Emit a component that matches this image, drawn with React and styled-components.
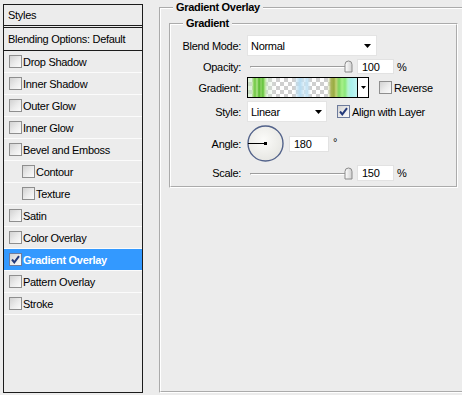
import React from 'react';
import styled, { createGlobalStyle } from 'styled-components';

const GlobalStyle = createGlobalStyle`
  html, body { margin: 0; padding: 0; background: #ececec; }
  body {
    font-family: "Liberation Sans", Arial, sans-serif;
    font-size: 11px;
    color: #000;
    overflow: hidden;
  }
  * { box-sizing: border-box; }
`;

const Page = styled.div`
  display: flex;
  align-items: flex-start;
  gap: 16px;
  width: 462px;
  height: 395px;
  padding: 4px 0 0 3px;
  overflow: hidden;
  letter-spacing: -0.3px;
`;

/* ---------- left styles list ---------- */
const StylesPanel = styled.div`
  flex: none;
  width: 140px;
  height: 389px;
  border: 1px solid #1c1c1c;
  display: flex;
  flex-direction: column;
`;

const PanelHeader = styled.div`
  height: 23px;
  padding-left: 4px;
  display: flex;
  align-items: center;
  border-bottom: 3px double #1c1c1c;
`;

const BlendRow = styled.div`
  height: 23px;
  padding-left: 4px;
  display: flex;
  align-items: center;
  border-bottom: 1px solid #1c1c1c;
`;

const StyleItem = styled.div`
  height: 22px;
  display: flex;
  align-items: center;
  gap: 1px;
  padding-left: ${p => (p.$indent ? 18 : 5)}px;
  border-bottom: 1px solid #fbfbfb;
  background: ${p => (p.$selected ? '#3399ff' : 'transparent')};
  color: ${p => (p.$selected ? '#fff' : '#000')};
  font-weight: ${p => (p.$selected ? 'bold' : 'normal')};
`;

const Box = styled.span`
  flex: none;
  position: relative;
  width: 13px;
  height: 13px;
  border: 1px solid ${p => (p.$checked ? '#6d7b9c' : '#8e8e8e')};
  background: linear-gradient(135deg, #d2d2d2 0%, #ececec 55%, #fbfbfb 100%);
  display: inline-flex;
  align-items: center;
  justify-content: center;
`;

const Check = ({ checked }) => (
  <Box $checked={checked}>
    {checked && (
      <svg width="11" height="11" viewBox="0 0 11 11">
        <path d="M2 5.5 L4.3 8.3 L9 2.2" fill="none" stroke="#23397a" strokeWidth="2" />
      </svg>
    )}
  </Box>
);

/* ---------- right side groups ---------- */
const Group = styled.fieldset`
  margin: 0;
  min-width: 0;
  border: 2px groove #fff;
`;

const OuterGroup = styled(Group)`
  flex: none;
  width: 320px;
  height: 392px;
  margin-top: -3px;
  padding: 3px 0 0 8px;
`;

const InnerGroup = styled(Group)`
  width: 289px;
  padding: 5px 0 5px 4px;
`;

const Legend = styled.legend`
  padding: 0 3px;
  margin-left: ${p => p.$indent}px;
  font-weight: bold;
  line-height: 13px;
`;

const Rows = styled.div`
  display: flex;
  flex-direction: column;
  gap: 3px;
`;

const Row = styled.div`
  display: flex;
  align-items: center;
  height: ${p => p.$h}px;
`;

const Label = styled.span`
  flex: none;
  width: 66px;
  margin-right: 6px;
  text-align: right;
`;

const Select = styled.div`
  flex: none;
  width: ${p => p.$w}px;
  height: 21px;
  background: #fff;
  border: 1px solid #e4e4e4;
  display: flex;
  align-items: center;
  justify-content: space-between;
  padding: 0 ${p => p.$pr}px 0 3px;
`;

const Arrow = ({ w = 7, h = 4 }) => (
  <svg width={w} height={h} viewBox={`0 0 ${w} ${h}`}>
    <polygon points={`0,0 ${w},0 ${w / 2},${h}`} fill="#000" />
  </svg>
);

const NumInput = styled.input`
  flex: none;
  width: ${p => p.$w}px;
  height: ${p => p.$h}px;
  margin: 0 0 0 ${p => p.$ml}px;
  padding: 0 0 0 4px;
  border: 1px solid #e2e2e2;
  background: #fff;
  font: inherit;
  letter-spacing: inherit;
  color: #000;
  outline: none;
`;

const Unit = styled.span`
  margin-left: 3px;
`;

const SliderBox = styled.div`
  flex: none;
  position: relative;
  width: 106px;
  height: 13px;
`;

const Track = styled.div`
  position: absolute;
  left: 3px;
  right: 4px;
  top: 6px;
  height: 2px;
  border-top: 1px solid #9d9d9d;
  border-bottom: 1px solid #fff;
  border-left: 1px solid #9d9d9d;
`;

const Thumb = styled.svg`
  position: absolute;
  top: 0;
`;

const Slider = ({ pos }) => (
  <SliderBox>
    <Track />
    <Thumb width="9" height="13" viewBox="0 0 9 13" style={{ left: pos }}>
      <defs>
        <linearGradient id="thg" x1="0" x2="1" y1="0" y2="0">
          <stop offset="0" stopColor="#ffffff" />
          <stop offset="1" stopColor="#cfcfcf" />
        </linearGradient>
      </defs>
      <path d="M1 4.5 Q1 1 4.5 1 Q8 1 8 4.5 L8 12 L1 12 Z" fill="url(#thg)" stroke="#8a8a8a" strokeWidth="1" />
    </Thumb>
  </SliderBox>
);

const GradientBox = styled.div`
  flex: none;
  display: flex;
  width: 122px;
  height: 21px;
  border: 1px solid #000;
  background: #fff;
`;

const Swatch = styled.div`
  flex: 1;
  background:
    linear-gradient(to right,
      rgba(196, 232, 186, 0.55) 0px, rgba(196, 232, 186, 0.55) 4px,
      #a6dc80 5px, #6cc840 7px, #b0e48c 9px, #54b82c 11px, #8fd468 13px,
      #5fc238 15px, #b8e698 17px, rgba(200, 232, 196, 0.5) 19px,
      rgba(220, 236, 220, 0.25) 24px, transparent 28px,
      transparent 46px, rgba(190, 222, 240, 0.6) 49px, #b6dcf2 52px,
      rgba(206, 232, 246, 0.6) 56px, #c2e2f4 59px, transparent 63px,
      transparent 79px, rgba(210, 220, 170, 0.6) 81px, #a9b45a 83px,
      #98ac40 86px, #c4d478 88px, #7cd460 91px, #a8f08a 94px,
      #8ae878 97px, #b6f4d2 100px, #a8f0ec 103px, #c6f6f4 110px),
    repeating-conic-gradient(#cfcfcf 0 25%, #ffffff 0 50%) 0 0 / 8px 8px;
`;

const SwatchArrow = styled.div`
  flex: none;
  width: 11px;
  border-left: 1px solid #000;
  display: flex;
  align-items: center;
  justify-content: center;
`;

const CheckLabel = styled.label`
  display: flex;
  align-items: center;
  gap: 2px;
  margin-left: 10px;
`;

const Dial = () => (
  <svg width="37" height="37" viewBox="0 0 37 37">
    <defs>
      <radialGradient id="dialg" cx="0.45" cy="0.4" r="0.6">
        <stop offset="0" stopColor="#fbfbf9" />
        <stop offset="1" stopColor="#e7e7e3" />
      </radialGradient>
    </defs>
    <circle cx="18.5" cy="18.5" r="17.5" fill="url(#dialg)" stroke="#52628a" strokeWidth="1.4" />
    <line x1="1" y1="18.5" x2="18.5" y2="18.5" stroke="#000" strokeWidth="1" />
    <rect x="17" y="17" width="3" height="3" fill="#000" />
  </svg>
);

const Degree = styled.span`
  margin-left: 4px;
  align-self: flex-start;
  margin-top: 11px;
`;

const effects = [
  { name: 'Drop Shadow' },
  { name: 'Inner Shadow' },
  { name: 'Outer Glow' },
  { name: 'Inner Glow' },
  { name: 'Bevel and Emboss' },
  { name: 'Contour', indent: true },
  { name: 'Texture', indent: true },
  { name: 'Satin' },
  { name: 'Color Overlay' },
  { name: 'Gradient Overlay', checked: true, selected: true },
  { name: 'Pattern Overlay' },
  { name: 'Stroke' },
];

export default function App() {
  return (
    <>
      <GlobalStyle />
      <Page>
        <StylesPanel>
          <PanelHeader>Styles</PanelHeader>
          <BlendRow>Blending Options: Default</BlendRow>
          {effects.map(e => (
            <StyleItem key={e.name} $indent={e.indent} $selected={e.selected}>
              <Check checked={e.checked} />
              <span>{e.name}</span>
            </StyleItem>
          ))}
        </StylesPanel>

        <OuterGroup>
          <Legend $indent={4}>Gradient Overlay</Legend>
          <InnerGroup>
            <Legend $indent={8}>Gradient</Legend>
            <Rows>
              <Row $h={21}>
                <Label>Blend Mode:</Label>
                <Select $w={130} $pr={5}>
                  <span>Normal</span>
                  <Arrow />
                </Select>
              </Row>
              <Row $h={15}>
                <Label>Opacity:</Label>
                <Slider pos={97} />
                <NumInput $w={37} $h={15} $ml={4} value="100" readOnly />
                <Unit>%</Unit>
              </Row>
              <Row $h={21}>
                <Label>Gradient:</Label>
                <GradientBox>
                  <Swatch />
                  <SwatchArrow>
                    <Arrow w={5} h={3} />
                  </SwatchArrow>
                </GradientBox>
                <CheckLabel>
                  <Check />
                  <span>Reverse</span>
                </CheckLabel>
              </Row>
              <Row $h={21}>
                <Label>Style:</Label>
                <Select $w={80} $pr={4}>
                  <span>Linear</span>
                  <Arrow />
                </Select>
                <CheckLabel>
                  <Check checked />
                  <span>Align with Layer</span>
                </CheckLabel>
              </Row>
              <Row $h={37}>
                <Label>Angle:</Label>
                <Dial />
                <NumInput $w={40} $h={16} $ml={5} value="180" readOnly />
                <Degree>°</Degree>
              </Row>
              <Row $h={16}>
                <Label>Scale:</Label>
                <Slider pos={97} />
                <NumInput $w={37} $h={16} $ml={4} value="150" readOnly />
                <Unit>%</Unit>
              </Row>
            </Rows>
          </InnerGroup>
        </OuterGroup>
      </Page>
    </>
  );
}
